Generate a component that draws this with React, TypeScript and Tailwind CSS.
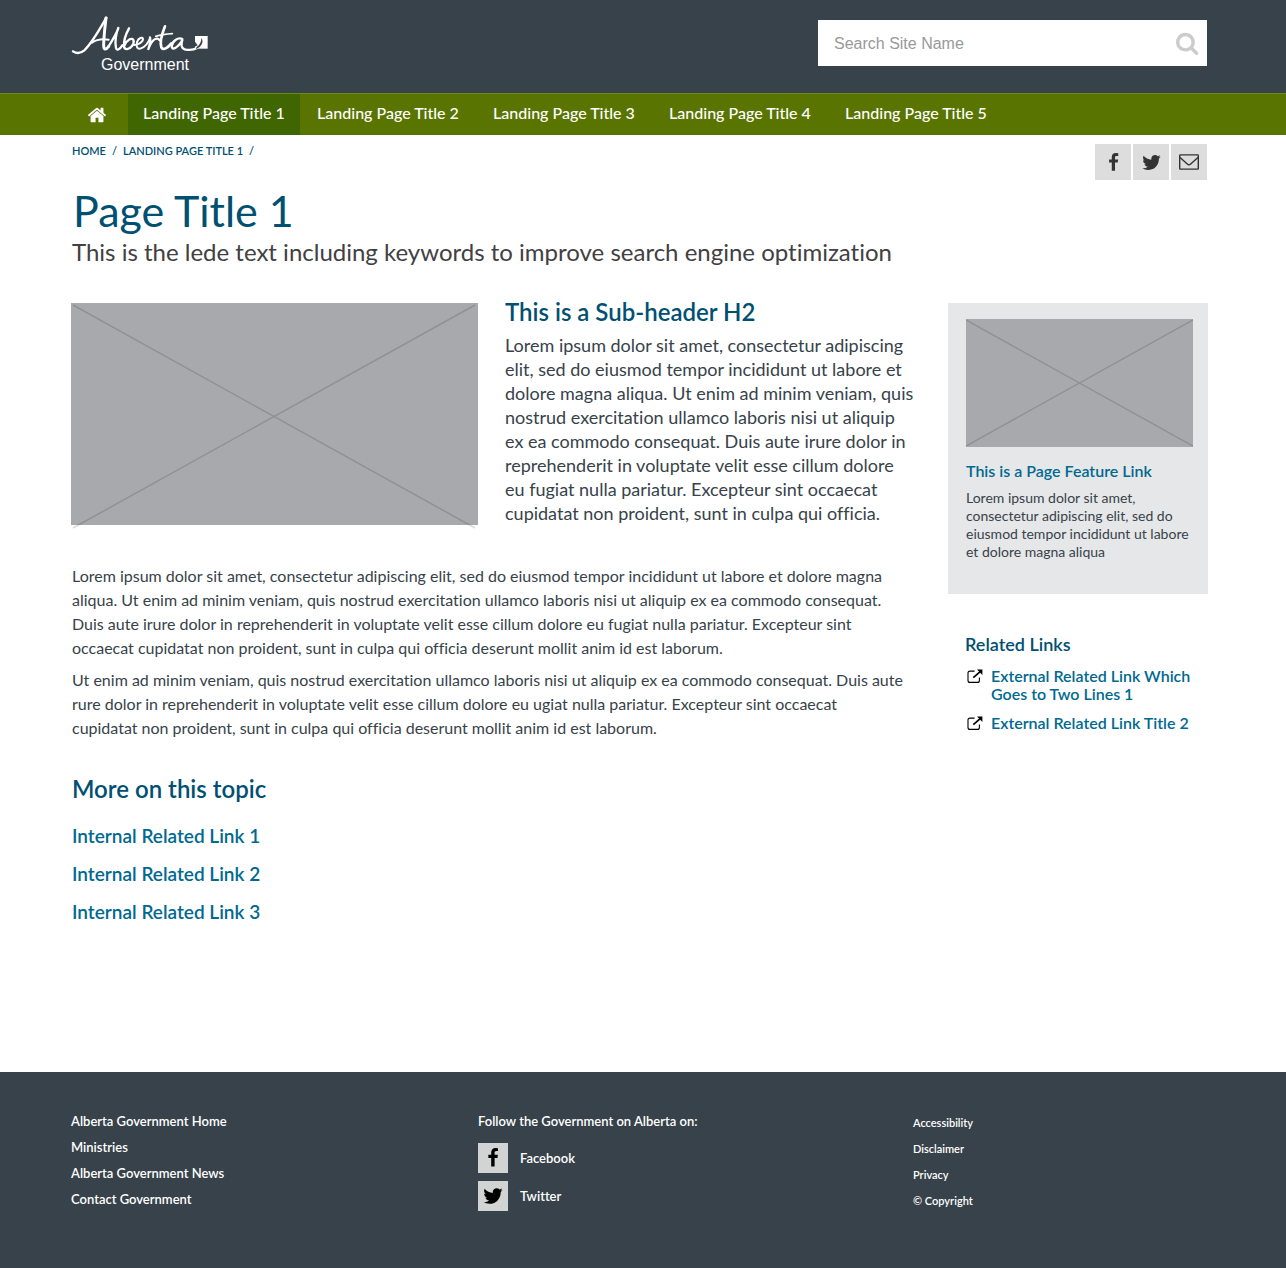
import React from "react";

const NAV = [
  "Landing Page Title 1",
  "Landing Page Title 2",
  "Landing Page Title 3",
  "Landing Page Title 4",
  "Landing Page Title 5",
];

const TOPIC_LINKS = ["Internal Related Link 1", "Internal Related Link 2", "Internal Related Link 3"];

const EXTERNAL_LINKS = ["External Related Link Which Goes to Two Lines 1", "External Related Link Title 2"];

const FOOTER_LINKS = ["Alberta Government Home", "Ministries", "Alberta Government News", "Contact Government"];

const LEGAL_LINKS = ["Accessibility", "Disclaimer", "Privacy", "© Copyright"];

type IconProps = { className?: string };

function Glyph({ d, className }: IconProps & { d: string }) {
  return (
    <svg viewBox="0 0 1792 1792" fill="currentColor" aria-hidden="true" className={className}>
      <path d={d} />
    </svg>
  );
}

const HomeIcon = (p: IconProps) => (
  <Glyph
    {...p}
    d="M1472 992v480q0 26-19 45t-45 19h-384v-384h-256v384h-384q-26 0-45-19t-19-45v-480q0-1 .5-3t.5-3l575-474 575 474q1 2 1 6zm223-69l-62 74q-8 9-21 11h-3q-13 0-21-7l-692-577-692 577q-12 8-24 7-13-2-21-11l-62-74q-8-10-7-23.5t11-21.5l719-599q32-26 76-26t76 26l244 204v-195q0-14 9-23t23-9h192q14 0 23 9t9 23v408l219 182q10 8 11 21.5t-7 23.5z"
  />
);

const SearchIcon = (p: IconProps) => (
  <Glyph
    {...p}
    d="M1152 832q0-185-131.5-316.5t-316.5-131.5-316.5 131.5-131.5 316.5 131.5 316.5 316.5 131.5 316.5-131.5 131.5-316.5zm512 832q0 52-38 90t-90 38q-54 0-90-38l-343-342q-179 124-399 124-143 0-273.5-55.5t-225-150-150-225-55.5-273.5 55.5-273.5 150-225 225-150 273.5-55.5 273.5 55.5 225 150 150 225 55.5 273.5q0 220-124 399l343 343q37 37 37 90z"
  />
);

const FacebookIcon = (p: IconProps) => (
  <Glyph
    {...p}
    d="M1343 12v264h-157q-86 0-116 36t-30 108v189h293l-39 296h-254v759h-306v-759h-255v-296h255v-218q0-186 104-288.5t277-102.5q147 0 228 12z"
  />
);

const TwitterIcon = (p: IconProps) => (
  <Glyph
    {...p}
    d="M1684 408q-67 98-162 167 1 14 1 42 0 130-38 259.5t-115.5 248.5-184.5 210.5-258 146-323 54.5q-271 0-496-145 35 4 78 4 225 0 401-138-105-2-188-64.5t-114-159.5q33 5 61 5 43 0 85-11-112-23-185.5-111.5t-73.5-205.5v-4q68 38 146 41-66-44-105-115t-39-154q0-88 44-163 121 149 294.5 238.5t371.5 99.5q-8-38-8-74 0-134 94.5-228.5t228.5-94.5q140 0 236 102 109-21 205-78-37 115-142 178 93-10 186-50z"
  />
);

function MailIcon({ className }: IconProps) {
  return (
    <svg viewBox="0 0 20 16" fill="none" stroke="currentColor" strokeWidth="1.4" aria-hidden="true" className={className}>
      <rect x="0.7" y="0.9" width="18.6" height="14.2" rx="0.6" />
      <path d="M0.8 3.2 8.3 9.9Q10 11.4 11.7 9.9L19.2 3.2" />
    </svg>
  );
}

function ExternalIcon({ className }: IconProps) {
  return (
    <svg viewBox="0 0 16 15" fill="none" stroke="currentColor" aria-hidden="true" className={className}>
      <path d="M7.6 2.1H3Q1 2.1 1 4.1V11.4Q1 13.4 3 13.4H10.4Q12.4 13.4 12.4 11.4V8.6" strokeWidth="1.1" />
      <path d="M6.3 8.7 13.2 2.6" strokeWidth="1.7" />
      <path d="M10 .5H15.4V5.9Z" fill="currentColor" stroke="none" />
    </svg>
  );
}

function Wordmark({ className }: IconProps) {
  return (
    <svg
      viewBox="33 30 414 120"
      fill="none"
      stroke="currentColor"
      strokeLinecap="round"
      strokeLinejoin="round"
      role="img"
      aria-label="Alberta"
      className={className}
    >
      <path d="M39 139C49 146 62 145 73 136C98 112 119 73 139 38" strokeWidth="7" />
      <path d="M138 39C135 66 131 96 131 121C131 135 137 136 146 124" strokeWidth="9" />
      <path d="M96 113C110 103 128 101 146 104" strokeWidth="6" />
      <path d="M146 124C160 100 173 81 175 69C168 82 164 112 168 129C171 139 180 132 187 121" strokeWidth="7" />
      <path d="M207 70C197 88 191 108 192 124C193 136 208 134 216 123C226 109 220 97 209 103C202 107 196 115 193 122" strokeWidth="7" />
      <path d="M220 120C232 121 249 112 249 102C248 94 235 99 231 111C227 125 232 134 243 130C255 126 265 113 270 99" strokeWidth="6" />
      <path d="M270 97C273 107 268 123 265 132C271 116 280 100 292 101C299 102 297 108 302 105" strokeWidth="7" />
      <path d="M315 64C307 84 299 112 304 127C309 138 324 128 334 115" strokeWidth="8" />
      <path d="M287 94C303 89 319 87 337 86" strokeWidth="5" />
      <path d="M367 102C354 96 336 108 335 124C335 137 353 130 367 105C362 119 364 130 374 133C388 136 401 135 411 129" strokeWidth="7" />
      <path d="M405 93H443V131H405Z" fill="currentColor" stroke="none" />
      <path d="M424 99C433 111 424 126 407 133L410 126C420 119 424 111 424 99Z" fill="#37424a" stroke="none" />
      <path d="M405 110 413 121 404 125Z" fill="#37424a" stroke="none" />
    </svg>
  );
}

/* Grey picture placeholder with crossed diagonals */
function Placeholder({ viewBox, d, className }: IconProps & { viewBox: string; d: string }) {
  return (
    <svg viewBox={viewBox} role="img" aria-label="Image placeholder" className={className}>
      <path d={d} stroke="#000000" strokeOpacity="0.14" strokeWidth="1.5" fill="none" />
    </svg>
  );
}

function Header() {
  return (
    <header className="flex h-[93px] items-start justify-between bg-[#37424a] pr-[79px] pl-[71px]">
      <a href="#" className="mt-[15px] flex flex-col text-white">
        <Wordmark className="h-10 w-[138px]" />
        <span className="ml-[30px] font-['Liberation_Sans',sans-serif] text-base leading-5">Government</span>
      </a>
      <form className="mt-5 flex h-[46px] w-[389px] items-center bg-white" onSubmit={(e) => e.preventDefault()}>
        <input
          type="search"
          aria-label="Search Site Name"
          placeholder="Search Site Name"
          className="h-full min-w-0 flex-1 pt-0.5 pl-4 font-['Liberation_Sans',sans-serif] text-base text-gray-700 outline-none placeholder:text-[#999999]"
        />
        <button type="submit" aria-label="Search" className="mr-[7px] text-[#cccccc]">
          <SearchIcon className="size-6" />
        </button>
      </form>
    </header>
  );
}

function Nav() {
  return (
    <nav aria-label="Main" className="flex h-[42px] border-t border-[#6a8a10] bg-[#5a7400] pl-[66px] text-white">
      <a href="#" aria-label="Home" className="flex w-[62px] items-center justify-center">
        <HomeIcon className="size-5" />
      </a>
      {NAV.map((label, i) => (
        <a
          key={label}
          href="#"
          aria-current={i === 0 ? "page" : undefined}
          className={
            i === 0
              ? "flex w-[172px] items-center justify-center bg-[#3f6600] pb-[3px] text-base font-medium"
              : "flex w-[176px] items-center justify-center pb-[3px] text-base font-medium"
          }
        >
          {label}
        </a>
      ))}
    </nav>
  );
}

function Share() {
  const box = "flex size-9 items-center justify-center bg-[#dddddd] text-[#333333]";
  return (
    <div className="flex gap-0.5">
      <a href="#" aria-label="Share on Facebook" className={box}>
        <FacebookIcon className="size-[19px]" />
      </a>
      <a href="#" aria-label="Share on Twitter" className={box}>
        <TwitterIcon className="size-[21px]" />
      </a>
      <a href="#" aria-label="Share by email" className={box}>
        <MailIcon className="h-4 w-5" />
      </a>
    </div>
  );
}

function Sidebar() {
  return (
    <aside className="w-[260px] shrink-0">
      <section className="bg-[#e6e7e8] px-[18px] pt-4 pb-[33px]">
        <Placeholder
          viewBox="0 0 227 128"
          d="M0 1 227 127M227 1 0 127"
          className="block h-32 w-[227px] bg-[#a7a9ac]"
        />
        <h2 className="mt-[14px] text-base leading-5 font-semibold text-[#006990]">
          <a href="#">This is a Page Feature Link</a>
        </h2>
        <p className="mt-2 text-sm leading-[18px] text-[#37424a]">
          Lorem ipsum dolor sit amet, consectetur adipiscing elit, sed do eiusmod tempor incididunt ut labore et dolore
          magna aliqua
        </p>
      </section>
      <section className="mt-[39px] pl-[17px]">
        <h2 className="text-lg leading-[22px] font-semibold text-[#005072]">Related Links</h2>
        <ul className="mt-3 flex flex-col gap-[11px]">
          {EXTERNAL_LINKS.map((label) => (
            <li key={label}>
              <a href="#" className="flex gap-2 text-base leading-[18px] font-semibold text-[#006990]">
                <ExternalIcon className="mt-0.5 ml-0.5 h-[15px] w-4 shrink-0 text-black" />
                {label}
              </a>
            </li>
          ))}
        </ul>
      </section>
    </aside>
  );
}

function Article() {
  return (
    <article className="min-w-0 flex-1">
      <div className="flex gap-[27px]">
        <Placeholder
          viewBox="0 0 407 222"
          d="M2 2 404 225M404 2 2 225"
          className="block h-[222px] w-[407px] shrink-0 overflow-visible bg-[#a7a9ac]"
        />
        <div className="min-w-0 flex-1 pr-[3px]">
          <h2 className="-mt-[5px] text-2xl leading-7 font-semibold text-[#005072]">This is a Sub-header H2</h2>
          <p className="mt-[7px] text-lg leading-6 text-[#37424a]">
            Lorem ipsum dolor sit amet, consectetur adipiscing elit, sed do eiusmod tempor incididunt ut labore et
            dolore magna aliqua. Ut enim ad minim veniam, quis nostrud exercitation ullamco laboris nisi ut aliquip ex
            ea commodo consequat. Duis aute irure dolor in reprehenderit in voluptate velit esse cillum dolore eu fugiat
            nulla pariatur. Excepteur sint occaecat cupidatat non proident, sunt in culpa qui officia.
          </p>
        </div>
      </div>
      <div className="mt-[39px] flex flex-col gap-2 pr-[13px] pl-px text-base leading-6 text-[#37424a]">
        <p>
          Lorem ipsum dolor sit amet, consectetur adipiscing elit, sed do eiusmod tempor incididunt ut labore et dolore
          magna aliqua. Ut enim ad minim veniam, quis nostrud exercitation ullamco laboris nisi ut aliquip ex ea commodo
          consequat. Duis aute irure dolor in reprehenderit in voluptate velit esse cillum dolore eu fugiat nulla
          pariatur. Excepteur sint <br className="hidden xl:inline" />
          occaecat cupidatat non proident, sunt in culpa qui officia deserunt mollit anim id est laborum.
        </p>
        <p>
          Ut enim ad minim veniam, quis nostrud exercitation ullamco laboris nisi ut aliquip ex ea commodo consequat.
          Duis aute rure dolor in reprehenderit in voluptate velit esse cillum dolore eu ugiat nulla pariatur. Excepteur
          sint occaecat cupidatat non proident, sunt in culpa qui officia deserunt mollit anim id est laborum.
        </p>
      </div>
      <section className="mt-[35px] pl-px">
        <h2 className="text-2xl leading-7 font-semibold text-[#005072]">More on this topic</h2>
        <ul className="mt-[21px] flex flex-col gap-[14px] text-[19px] leading-6 font-semibold text-[#006990]">
          {TOPIC_LINKS.map((label) => (
            <li key={label}>
              <a href="#">{label}</a>
            </li>
          ))}
        </ul>
      </section>
    </article>
  );
}

function Footer() {
  const tile = "flex size-[30px] items-center justify-center bg-[#d2d4d3] text-black";
  return (
    <footer className="flex h-[196px] bg-[#37424a] pt-9 pl-[71px] text-[13px] leading-[26px] font-semibold text-white">
      <ul className="w-[407px]">
        {FOOTER_LINKS.map((label) => (
          <li key={label}>
            <a href="#">{label}</a>
          </li>
        ))}
      </ul>
      <div className="w-[435px]">
        <h2>Follow the Government on Alberta on:</h2>
        <ul className="mt-[9px] flex flex-col gap-2">
          <li>
            <a href="#" className="flex items-center gap-3">
              <span className={tile}>
                <FacebookIcon className="size-5" />
              </span>
              Facebook
            </a>
          </li>
          <li>
            <a href="#" className="flex items-center gap-3">
              <span className={tile}>
                <TwitterIcon className="size-[22px]" />
              </span>
              Twitter
            </a>
          </li>
        </ul>
      </div>
      <ul className="pt-0.5 text-[11px]">
        {LEGAL_LINKS.map((label) => (
          <li key={label} className="h-[26px]">
            <a href="#">{label}</a>
          </li>
        ))}
      </ul>
    </footer>
  );
}

export default function App() {
  return (
    <div className="flex min-h-screen flex-col bg-white font-[Lato,sans-serif] [font-variant-ligatures:none]">
      <Header />
      <Nav />
      <main className="flex-1 pr-[78px] pb-[148px] pl-[71px]">
        <div className="flex h-[45px] items-start justify-between pt-[9px] pr-px">
          <nav aria-label="Breadcrumb" className="flex gap-1.5 pl-px text-[11px] leading-[14px] font-semibold text-[#005072]">
            <a href="#">HOME</a>
            <span>/</span>
            <a href="#">LANDING PAGE TITLE 1</a>
            <span>/</span>
          </nav>
          <Share />
        </div>
        <h1 className="mt-[7px] pl-0.5 text-[43px] leading-12 text-[#005072]">Page Title 1</h1>
        <p className="mt-px pl-px text-2xl leading-8 text-[#414042]">
          This is the lede text including keywords to improve search engine optimization
        </p>
        <div className="mt-[35px] flex gap-[30px]">
          <Article />
          <Sidebar />
        </div>
      </main>
      <Footer />
    </div>
  );
}
